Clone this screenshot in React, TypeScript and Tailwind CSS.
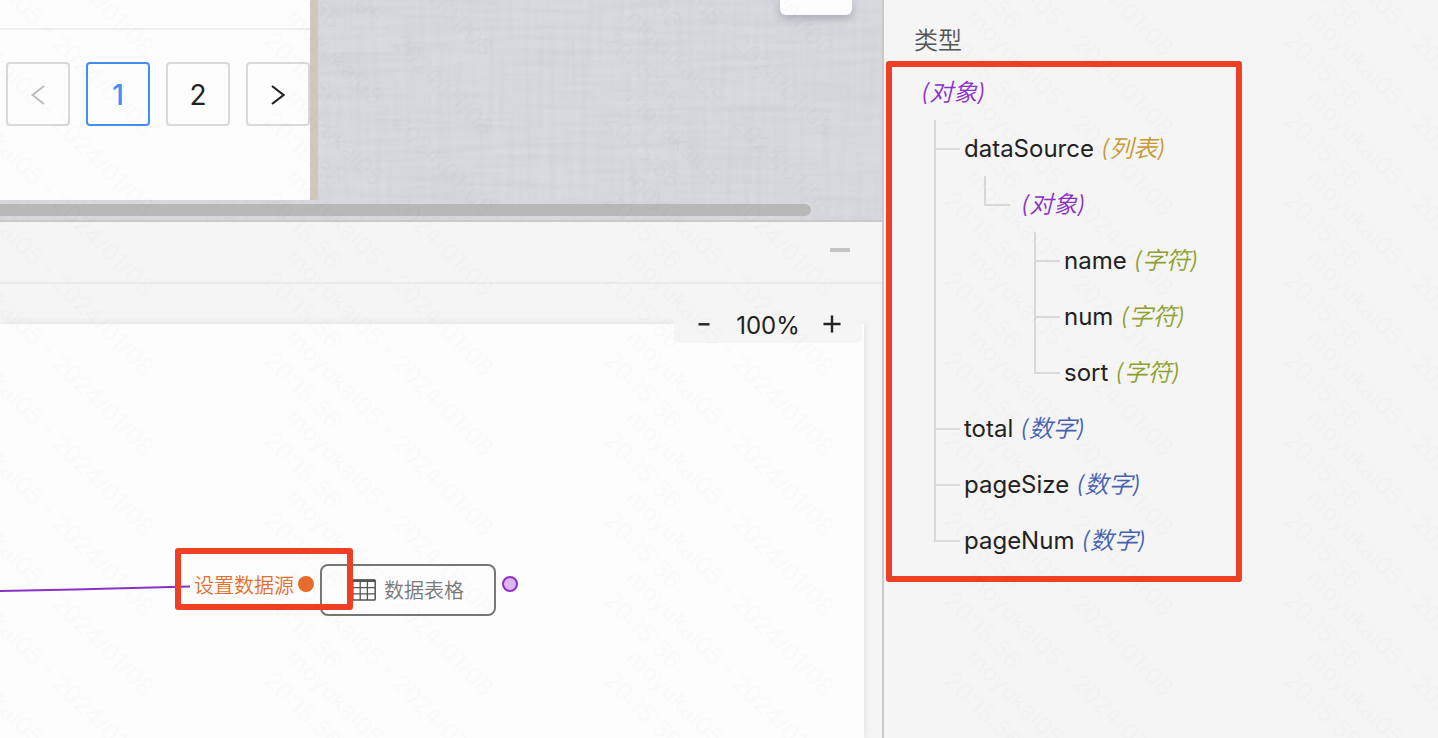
import React from "react";

type TypeNode = { name?: string; type: "对象" | "列表" | "字符" | "数字"; children?: TypeNode[] };

const schema: TypeNode = {
  type: "对象",
  children: [
    {
      name: "dataSource",
      type: "列表",
      children: [
        {
          type: "对象",
          children: [
            { name: "name", type: "字符" },
            { name: "num", type: "字符" },
            { name: "sort", type: "字符" },
          ],
        },
      ],
    },
    { name: "total", type: "数字" },
    { name: "pageSize", type: "数字" },
    { name: "pageNum", type: "数字" },
  ],
};

const typeColor: Record<TypeNode["type"], string> = {
  对象: "text-[#8a32c8]",
  列表: "text-[#c99832]",
  字符: "text-[#8fa02d]",
  数字: "text-[#4560b5]",
};

function TreeNode({ node }: { node: TypeNode }) {
  const kids = node.children ?? [];
  return (
    <>
      <div className="flex h-14 items-center whitespace-nowrap pt-0.5 text-2xl text-[#222]">
        {node.name && <span>{node.name}</span>}
        <span className={"ml-[7px] font-[350] italic " + typeColor[node.type]}>({node.type})</span>
      </div>
      {kids.length > 0 && (
        <ul className="ml-5">
          {kids.map((kid, i) => (
            <li key={i} className="relative pl-[30px]">
              <i
                className={
                  "absolute left-0 top-0 w-0.5 bg-[#d9d9d9] " + (i === kids.length - 1 ? "h-[30px]" : "h-full")
                }
              />
              <i className="absolute left-0 top-7 h-0.5 w-[26px] bg-[#d9d9d9]" />
              <TreeNode node={kid} />
            </li>
          ))}
        </ul>
      )}
    </>
  );
}

function Linen() {
  return (
    <svg className="absolute inset-0 h-full w-full" preserveAspectRatio="none">
      <filter id="warp" x="0" y="0" width="100%" height="100%" colorInterpolationFilters="sRGB">
        <feTurbulence type="fractalNoise" baseFrequency="0.16 0.01" numOctaves="2" seed="4" />
        <feColorMatrix values="0.07 0 0 0 0.805  0.07 0 0 0 0.81  0.07 0 0 0 0.828  0 0 0 0 1" />
      </filter>
      <filter id="weft" x="0" y="0" width="100%" height="100%" colorInterpolationFilters="sRGB">
        <feTurbulence type="fractalNoise" baseFrequency="0.01 0.16" numOctaves="2" seed="9" />
        <feColorMatrix values="0.07 0 0 0 0.805  0.07 0 0 0 0.81  0.07 0 0 0 0.828  0 0 0 0 1" />
      </filter>
      <rect width="100%" height="100%" filter="url(#warp)" />
      <rect width="100%" height="100%" filter="url(#weft)" opacity="0.5" />
    </svg>
  );
}

function Pagination() {
  const box = "flex size-16 shrink-0 items-center justify-center rounded border-2 text-[28px] ";
  return (
    <div className="flex gap-4 pl-1.5 pt-8">
      <div className={box + "border-[#d9d9d9]"}>
        <svg className="mt-0.5 h-[20px] w-[14px]" viewBox="0 0 14 20" fill="none" stroke="#bcbcbc" strokeWidth="2">
          <path d="M13 1 1.5 10 13 19" />
        </svg>
      </div>
      <div className={box + "border-[#438df5] pt-px font-medium text-[#438df5]"}>1</div>
      <div className={box + "border-[#d9d9d9] pt-px text-[#222]"}>2</div>
      <div className={box + "border-[#d9d9d9]"}>
        <svg className="mt-0.5 h-[20px] w-[14px]" viewBox="0 0 14 20" fill="none" stroke="#222" strokeWidth="2.2">
          <path d="M1 1 12.5 10 1 19" />
        </svg>
      </div>
    </div>
  );
}

function TableIcon() {
  return (
    <svg className="h-6 w-6" viewBox="0 0 24 24" fill="none" stroke="#555">
      <rect x="0.8" y="2" width="22.4" height="20" rx="0.8" strokeWidth="1.5" />
      <path d="M0.8 2.7H23.2" strokeWidth="2.6" />
      <path d="M1 9.6H23M1 15.8H23M8.2 3V22M15.4 3V22" strokeWidth="1.3" />
    </svg>
  );
}

const columns = [-52, 288, 628, 968, 1308];
const rows = [-140, -60, 20, 100, 180, 260, 340, 420, 500, 580, 660];

function Watermark() {
  return (
    <div className="pointer-events-none absolute inset-0 z-10 overflow-hidden text-2xl leading-8 text-black opacity-[0.011]">
      {columns.map((x) =>
        rows.map((y) => (
          <div
            key={x + "/" + y}
            className="absolute origin-top-left rotate-45 whitespace-nowrap"
            style={{ left: x + 14, top: y - 18 }}
          >
            moyukai05 - 2024/01/08
            <br />
            20:15:56
          </div>
        )),
      )}
    </div>
  );
}

export default function App() {
  return (
    <div className="relative flex h-[738px] w-[1438px] overflow-hidden bg-[#f5f5f5] font-['Inter','Noto_Sans_CJK_SC',sans-serif]">
      <main className="flex w-[884px] shrink-0 flex-col border-r-2 border-[#c9c9c9]">
        <section className="relative flex h-[222px] shrink-0 flex-col border-b-2 border-[#c9c9c9] bg-[#d5d6db]">
          <Linen />
          <div className="relative flex h-[200px]">
            <div className="w-[310px] overflow-hidden bg-[#fdfdfd]">
              <div className="h-[30px] border-b-2 border-[#eee]" />
              <Pagination />
            </div>
            <div className="w-2 bg-[#d0c8bc]" />
            <div className="ml-[462px] h-[15px] w-[72px] rounded-b-md bg-[#fdfdfd] shadow-[0_3px_10px_rgba(60,60,90,0.3)]" />
          </div>
          <div className="relative mt-1 h-3 w-[811px] rounded-r-full bg-[#b8b8b8]" />
        </section>
        <header className="flex h-[62px] shrink-0 items-center justify-end border-b-2 border-[#ebebeb] pr-8">
          <div className="mb-1 h-1 w-5 bg-[#c4c4c4]" />
        </header>
        <section className="relative flex-1 pt-10">
          <div className="relative h-full w-[864px] bg-[#fdfdfd] shadow-[0_0_8px_rgba(0,0,0,0.1)]">
            <svg className="absolute left-0 top-[250px] h-6 w-[190px]" viewBox="0 0 190 24" fill="none">
              <path d="M0 17C65 16 120 14 190 12.5" stroke="#8a32c8" strokeWidth="2" />
            </svg>
            <div className="absolute left-[194px] top-[245px] flex h-[30px] items-center gap-1 text-xl text-[#e56e2c]">
              <span className="pt-[3px] font-[350]">设置数据源</span>
              <i className="size-4 rounded-full bg-[#e56e2c]" />
            </div>
            <div className="absolute left-[320px] top-[240px] flex h-[52px] w-44 items-center gap-2 rounded-lg border-2 border-[#777] pl-[30px] text-xl text-[#777]">
              <TableIcon />
              <span className="pt-0.5 font-[350]">数据表格</span>
            </div>
            <i className="absolute left-[502px] top-[252px] size-4 rounded-full border-2 border-[#8a32c8] bg-[#dcb5f2]" />
            <div className="absolute left-[175px] top-[224px] h-[62px] w-[178px] rounded-[3px] border-6 border-[#ef4026]" />
          </div>
          <div className="absolute left-[674px] top-[22px] flex h-[37px] w-[188px] items-center rounded-md bg-[#f5f5f5] text-2xl text-[#222]">
            <svg className="ml-6 h-5 w-3" viewBox="0 0 12 20" stroke="#222" strokeWidth="2.4">
              <path d="M0.5 9.3H11.5" />
            </svg>
            <span className="ml-[26px] w-16 pt-0.5 text-center">100%</span>
            <svg className="mb-0.5 ml-[23px] size-[18px]" viewBox="0 0 18 18" stroke="#222" strokeWidth="2.4">
              <path d="M0.5 9H17.5M9 0.5V17.5" />
            </svg>
          </div>
        </section>
      </main>
      <aside className="flex-1 pl-[30px] pt-[25px]">
        <h2 className="h-[39px] text-2xl font-[350] leading-8 text-[#555]">类型</h2>
        <TreeNode node={schema} />
      </aside>
      <div className="absolute left-[886px] top-[61px] h-[521px] w-[356px] rounded-[3px] border-6 border-[#ef4026]" />
      <Watermark />
    </div>
  );
}
